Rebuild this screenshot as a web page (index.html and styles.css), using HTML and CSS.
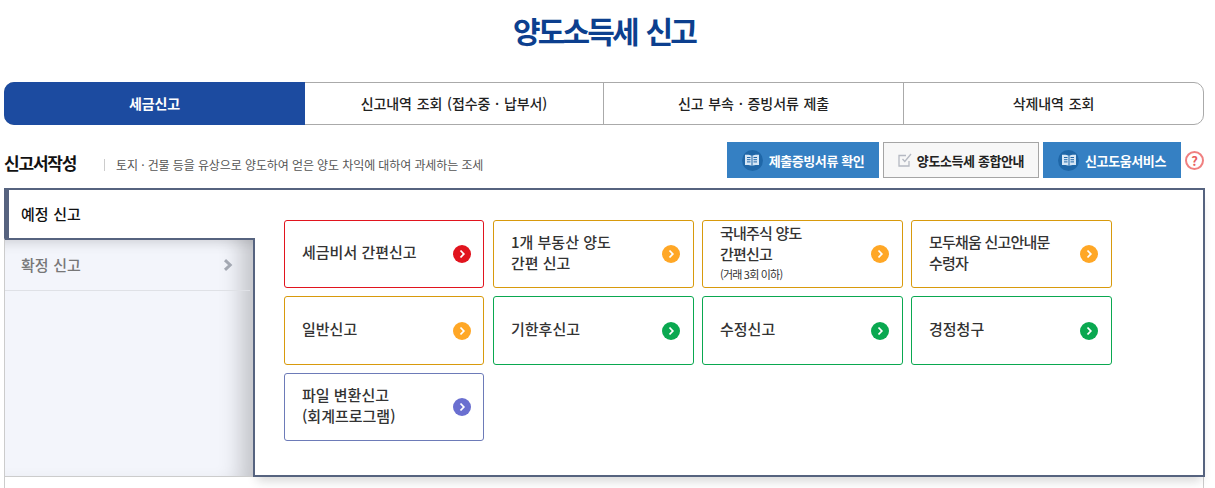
FILE: index.html
```html
<!DOCTYPE html>
<html lang="ko">
<head>
<meta charset="utf-8">
<title>양도소득세 신고</title>
<link rel="stylesheet" href="styles.css">
</head>
<body>
<h1 class="title">양도소득세 신고</h1>
<nav class="tabs">
  <a class="tab active">세금신고</a>
  <a class="tab second">신고내역 조회 (접수중 · 납부서)</a>
  <a class="tab">신고 부속 · 증빙서류 제출</a>
  <a class="tab">삭제내역 조회</a>
</nav>
<div class="head">
  <h2 class="head-title">신고서작성</h2>
  <p class="head-desc">토지 · 건물 등을 유상으로 양도하여 얻은 양도 차익에 대하여 과세하는 조세</p>
  <div class="actions">
    <a class="btn btn-blue btn-a"><span class="btn-icon"><svg width="16" height="14" viewBox="0 0 16 14"><path d="M8 3C6.500 1.800 3.500 1.500 1 1.800V12C3.500 11.700 6.500 12 8 13C9.500 12 12.500 11.700 15 12V1.800C12.500 1.500 9.500 1.800 8 3Z" fill="#d5e6f5"/><path d="M8 3V13M3 4.500H6.500M3 6.700H6.500M3 8.900H6.500M9.500 4.500H13M9.500 6.700H13M9.500 8.900H13" stroke="#1f67a8" fill="none"/></svg></span>제출증빙서류 확인</a>
    <a class="btn btn-gray"><svg class="check" width="14" height="14" viewBox="0 0 14 14"><path d="M11 8V13H1V2.500H8" fill="none" stroke="#b5b9c2" stroke-width="1.300"/><path d="M4.500 6L6.800 8.500L13 1" fill="none" stroke="#b5b9c2" stroke-width="1.300"/></svg>양도소득세 종합안내</a>
    <a class="btn btn-blue btn-c"><span class="btn-icon"><svg width="16" height="14" viewBox="0 0 16 14"><path d="M8 3C6.500 1.800 3.500 1.500 1 1.800V12C3.500 11.700 6.500 12 8 13C9.500 12 12.500 11.700 15 12V1.800C12.500 1.500 9.500 1.800 8 3Z" fill="#d5e6f5"/><path d="M8 3V13M3 4.500H6.500M3 6.700H6.500M3 8.900H6.500M9.500 4.500H13M9.500 6.700H13M9.500 8.900H13" stroke="#1f67a8" fill="none"/></svg></span>신고도움서비스</a>
    <span class="help">?</span>
  </div>
</div>
<section class="panel">
  <aside class="side">
    <a class="side-item current">예정 신고</a>
    <div class="side-rest">
      <a class="side-item">확정 신고<svg width="10" height="12" viewBox="0 0 10 12"><path d="M2 1.200L7.200 6L2 10.800" fill="none" stroke="#a3a8b2" stroke-width="3"/></svg></a>
    </div>
  </aside>
  <div class="content">
    <div class="cards">
      <a class="card red"><span class="card-text first">세금비서 간편신고</span><i class="arrow"><svg width="10" height="10" viewBox="0 0 10 10"><path d="M3.500 1.500L6.800 5L3.500 8.500" fill="none" stroke="#fff" stroke-width="1.800"/></svg></i></a>
      <a class="card orange"><span class="card-text">1개 부동산 양도<br>간편 신고</span><i class="arrow"><svg width="10" height="10" viewBox="0 0 10 10"><path d="M3.500 1.500L6.800 5L3.500 8.500" fill="none" stroke="#fff" stroke-width="1.800"/></svg></i></a>
      <a class="card orange"><span class="card-text tight">국내주식 양도<br>간편신고<small>(거래 3회 이하)</small></span><i class="arrow"><svg width="10" height="10" viewBox="0 0 10 10"><path d="M3.500 1.500L6.800 5L3.500 8.500" fill="none" stroke="#fff" stroke-width="1.800"/></svg></i></a>
      <a class="card orange"><span class="card-text tight">모두채움 신고안내문<br>수령자</span><i class="arrow"><svg width="10" height="10" viewBox="0 0 10 10"><path d="M3.500 1.500L6.800 5L3.500 8.500" fill="none" stroke="#fff" stroke-width="1.800"/></svg></i></a>
      <a class="card orange"><span class="card-text">일반신고</span><i class="arrow"><svg width="10" height="10" viewBox="0 0 10 10"><path d="M3.500 1.500L6.800 5L3.500 8.500" fill="none" stroke="#fff" stroke-width="1.800"/></svg></i></a>
      <a class="card green"><span class="card-text">기한후신고</span><i class="arrow"><svg width="10" height="10" viewBox="0 0 10 10"><path d="M3.500 1.500L6.800 5L3.500 8.500" fill="none" stroke="#fff" stroke-width="1.800"/></svg></i></a>
      <a class="card green"><span class="card-text">수정신고</span><i class="arrow"><svg width="10" height="10" viewBox="0 0 10 10"><path d="M3.500 1.500L6.800 5L3.500 8.500" fill="none" stroke="#fff" stroke-width="1.800"/></svg></i></a>
      <a class="card green"><span class="card-text">경정청구</span><i class="arrow"><svg width="10" height="10" viewBox="0 0 10 10"><path d="M3.500 1.500L6.800 5L3.500 8.500" fill="none" stroke="#fff" stroke-width="1.800"/></svg></i></a>
      <a class="card purple"><span class="card-text">파일 변환신고<br>(회계프로그램)</span><i class="arrow"><svg width="10" height="10" viewBox="0 0 10 10"><path d="M3.500 1.500L6.800 5L3.500 8.500" fill="none" stroke="#fff" stroke-width="1.800"/></svg></i></a>
    </div>
  </div>
</section>
<div class="below"></div>
</body>
</html>
```
FILE: styles.css
```css
* { box-sizing: border-box; }
html, body { height: 100%; }
body {
  margin: 0;
  padding: 0 11px 0 4px;
  overflow: hidden;
  background: #fff;
  color: #222;
  font-family: "Noto Sans CJK KR", "Noto Sans", sans-serif;
}
.title {
  margin: 0;
  height: 82px;
  padding-top: 7px;
  text-align: center;
  font-size: 30px;
  line-height: 46px;
  font-weight: 700;
  letter-spacing: -2.8px;
  word-spacing: 3px;
  color: #0c3f8e;
}
.tabs {
  display: flex;
  height: 43px;
  border: 1px solid #aaa;
  border-radius: 10px;
  font-size: 14px;
  font-weight: 500;
  letter-spacing: -.1px;
  word-spacing: 1px;
}
.tab {
  display: flex;
  align-items: center;
  justify-content: center;
  flex: 0 0 300px;
  padding-bottom: 2px;
  border-left: 1px solid #aaa;
  color: #222;
}
.tab.second { flex-basis: 298px; border-left: 0; }
.tab:last-child { flex: 1; }
.tab.active {
  flex: 0 0 301px;
  margin: -1px 0 -1px -1px;
  border: 0;
  border-radius: 10px 0 0 10px;
  background: #1c4ba0;
  color: #fff;
  font-weight: 700;
}
.head {
  display: flex;
  align-items: center;
  height: 36px;
  margin-top: 17px;
}
.head-title {
  margin: 6px 0 0;
  width: 100px;
  font-size: 17px;
  line-height: 36px;
  font-weight: 700;
  letter-spacing: -1.2px;
  color: #111;
}
.head-desc {
  margin: 9px 0 0;
  padding-left: 11px;
  border-left: 1px solid #ccc;
  font-size: 12px;
  line-height: 12px;
  letter-spacing: -.1px;
  color: #555;
}
.actions {
  display: flex;
  align-items: center;
  margin-left: auto;
  gap: 4px;
}
.btn {
  display: flex;
  align-items: center;
  justify-content: center;
  height: 36px;
  font-size: 13px;
  font-weight: 700;
  letter-spacing: -.4px;
}
.btn-blue { background: #3580c3; color: #fff; }
.btn-a { width: 152px; }
.btn-c { width: 138px; }
.btn-gray {
  width: 156px;
  background: #f7f7f7;
  border: 1px solid #a5a5a5;
  color: #222;
}
.btn-icon {
  display: flex;
  align-items: center;
  justify-content: center;
  width: 21px;
  height: 21px;
  margin-right: 6px;
  border-radius: 50%;
  background: #1f67a8;
}
.check { margin-right: 5px; }
.help {
  display: flex;
  align-items: center;
  justify-content: center;
  width: 19px;
  height: 19px;
  border: 2px solid #f08080;
  border-radius: 50%;
  font-size: 13px;
  line-height: 1;
  font-weight: 700;
  color: #e85d5d;
}
.panel {
  display: flex;
  height: 289px;
  margin: 10px -1px 0 0;
}
.side {
  display: flex;
  flex-direction: column;
  flex: 0 0 249px;
  min-width: 0;
  position: relative;
  z-index: 1;
}
.side-item {
  display: flex;
  align-items: center;
  font-size: 15px;
  font-weight: 500;
  word-spacing: .5px;
}
.side-item.current {
  flex: none;
  width: 251px;
  height: 50px;
  padding: 0 0 2px 12px;
  border-top: 2px solid #56637f;
  border-left: 5px solid #56637f;
  background: #fff;
  color: #111;
}
.side-rest {
  flex: 1;
  border-top: 2px solid #56637f;
  border-left: 1px solid #ccc;
  border-bottom: 1px solid #ccc;
  background: #f3f5fb;
  box-shadow: inset -26px 0 22px -14px rgba(0,0,0,.2), inset 0 14px 14px -12px rgba(0,0,0,.14);
}
.side-rest .side-item {
  justify-content: space-between;
  height: 51px;
  margin-right: 3px;
  padding: 0 17px 1px 16px;
  border-bottom: 1px solid #dfe1e6;
  color: #777;
}
.content {
  flex: 1;
  padding: 30px 0 0 29px;
  border: 2px solid #56637f;
  background: #fff;
  box-shadow: 0 8px 10px -4px rgba(0,0,0,.16);
}
.below {
  height: 11px;
  border-left: 1px solid #ccc;
  border-right: 1px solid #ccc;
}
.cards {
  display: grid;
  grid-template-columns: repeat(4, 201px);
  grid-template-rows: 68px 69px 68px;
  gap: 8px;
}
.card {
  display: flex;
  justify-content: space-between;
  align-items: center;
  padding: 0 13px 0 17px;
  border: 1px solid;
  border-radius: 3px;
  font-size: 15px;
  font-weight: 500;
  line-height: 21px;
  color: #333;
  background: #fff;
}
.card:nth-child(4n+1) {
  margin-right: 1px;
  padding-right: 12px;
}
.card-text { margin-bottom: 4px; }
.card-text.first { margin-bottom: 5px; }
.card-text.tight { letter-spacing: -.8px; }
.card-text small {
  display: block;
  margin-top: 2px;
  font-size: 11px;
  font-weight: 400;
  line-height: 16px;
}
.arrow {
  display: flex;
  align-items: center;
  justify-content: center;
  width: 18px;
  height: 18px;
  border-radius: 50%;
}
.red { border-color: #e1141e; }
.red .arrow { background: #e1141e; }
.orange { border-color: #d89a0c; }
.orange .arrow { background: #ffa726; }
.green { border-color: #0aa850; }
.green .arrow { background: #0aa850; }
.purple { border-color: #6d7bb8; }
.purple .arrow { background: #6a6fd0; }
```
